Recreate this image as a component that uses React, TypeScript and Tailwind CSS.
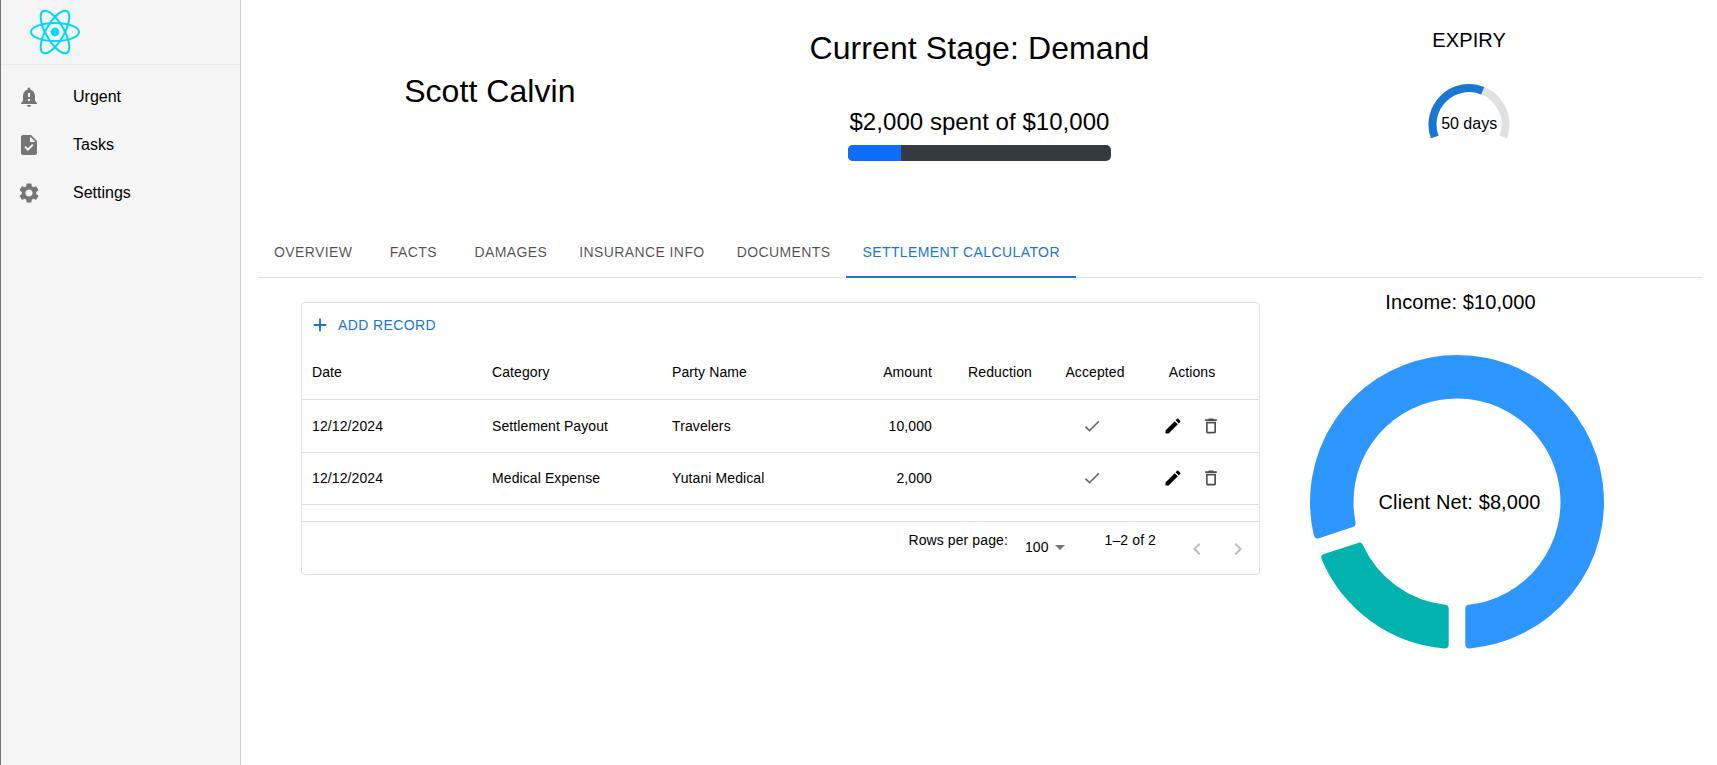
import React from "react";
import {
  MdAdd,
  MdArrowDropDown,
  MdCheck,
  MdChevronLeft,
  MdChevronRight,
  MdEdit,
  MdNotificationImportant,
  MdOutlineDelete,
  MdSettings,
  MdTask,
} from "react-icons/md";

const navItems = [
  { label: "Urgent", icon: MdNotificationImportant },
  { label: "Tasks", icon: MdTask },
  { label: "Settings", icon: MdSettings },
];

const tabs = ["Overview", "Facts", "Damages", "Insurance Info", "Documents", "Settlement Calculator"];

const rows = [
  { date: "12/12/2024", category: "Settlement Payout", party: "Travelers", amount: "10,000" },
  { date: "12/12/2024", category: "Medical Expense", party: "Yutani Medical", amount: "2,000" },
];

const columns = "grid grid-cols-[180px_180px_180px_100px_100px_100px_100px]";

// outline of a ring slice, inset by the corner radius: the stroke rounds it back out
function slicePath(from: number, to: number) {
  const cx = 150;
  const cy = 150;
  const outer = 143;
  const inner = 107.5;
  const pad = 12.3;
  const rad = (deg: number) => (deg * Math.PI) / 180;
  const dOuter = Math.asin(pad / outer);
  const dInner = Math.asin(pad / inner);
  const pt = (r: number, a: number) => `${cx + r * Math.sin(a)} ${cy - r * Math.cos(a)}`;
  const large = to - from > 180 ? 1 : 0;
  const a0 = rad(from);
  const a1 = rad(to);
  return [
    `M${pt(outer, a0 + dOuter)}`,
    `A${outer} ${outer} 0 ${large} 1 ${pt(outer, a1 - dOuter)}`,
    `L${pt(inner, a1 - dInner)}`,
    `A${inner} ${inner} 0 ${large} 0 ${pt(inner, a0 + dInner)}`,
    "Z",
  ].join(" ");
}

function ReactLogo() {
  return (
    <svg width="52" height="46" viewBox="-26 -23 52 46" fill="none" stroke="#00d8ff" strokeWidth="2">
      <circle r="4.4" fill="#00d8ff" stroke="none" />
      <ellipse rx="24" ry="9" />
      <ellipse rx="24" ry="9" transform="rotate(60)" />
      <ellipse rx="24" ry="9" transform="rotate(120)" />
    </svg>
  );
}

function ExpiryGauge() {
  return (
    <div className="relative w-[84px] h-[58px]">
      <svg width="84" height="58" viewBox="0 0 84 58" fill="none" strokeWidth="8">
        <path d="M7.7 54 A36.5 36.5 0 1 1 76.3 54" stroke="#e0e0e0" />
        <path d="M7.7 54 A36.5 36.5 0 0 1 55.7 7.7" stroke="#1976d2" />
      </svg>
      <span className="absolute left-0 right-0 top-[32px] text-center text-base leading-[18px] text-black">50 days</span>
    </div>
  );
}

function Sidebar() {
  return (
    <aside className="w-[241px] shrink-0 bg-[#f5f5f5] border-l border-l-[#757575] border-r border-r-[#cfcfcf]">
      <div className="h-[65px] border-b border-[#ececec] pl-[28px] pt-[9px]">
        <ReactLogo />
      </div>
      <nav className="pt-[8px]">
        {navItems.map((item) => (
          <div key={item.label} className="h-12 flex items-center pl-4">
            <item.icon size={24} className="text-[#757575] shrink-0" />
            <span className="ml-8 text-base text-black">{item.label}</span>
          </div>
        ))}
      </nav>
    </aside>
  );
}

function Header() {
  return (
    <header className="h-[229px] grid grid-cols-3 pl-[4px] pr-[3px] text-black">
      <div className="flex justify-center pt-[73px]">
        <h1 className="text-[32px] leading-[37px] tracking-[0.05px]">Scott Calvin</h1>
      </div>
      <div className="flex flex-col items-center pt-[30px]">
        <h2 className="text-[32px] leading-[37px] tracking-[0.1px]">Current Stage: Demand</h2>
        <p className="mt-[41px] text-2xl leading-[28px] tracking-[0.05px]">$2,000 spent of $10,000</p>
        <div className="mt-[9px] w-[263px] h-4 rounded-[5px] bg-[#343a40] overflow-hidden">
          <div className="w-1/5 h-full bg-[#0d6efd]" />
        </div>
      </div>
      <div className="flex flex-col items-center pt-[29px]">
        <h3 className="text-xl leading-[23px] tracking-[0.1px]">EXPIRY</h3>
        <div className="mt-[31px]">
          <ExpiryGauge />
        </div>
      </div>
    </header>
  );
}

function Tabs() {
  return (
    <div className="ml-[17px] mr-[14px] flex h-[49px] border-b border-[#e0e0e0]">
      {tabs.map((tab) => {
        const active = tab === "Settlement Calculator";
        return (
          <div
            key={tab}
            className={
              active
                ? "min-w-[90px] h-[49px] px-4 pb-[2px] flex items-center justify-center text-sm uppercase tracking-[0.4px] text-[#1976d2] border-b-2 border-[#1976d2]"
                : "min-w-[90px] h-[49px] px-4 pb-[2px] flex items-center justify-center text-sm uppercase tracking-[0.4px] text-[#000000b0] border-b-2 border-transparent"
            }
          >
            {tab}
          </div>
        );
      })}
    </div>
  );
}

function RecordsTable() {
  return (
    <div className="w-[959px] h-[273px] shrink-0 border border-[#e0e0e0] rounded flex flex-col text-sm tracking-[0.1px] text-black">
      <div className="h-[43px] flex items-center pl-[7px] text-[#1976d2] uppercase tracking-[0.4px] shrink-0">
        <MdAdd size={22} />
        <span className="ml-[7px]">Add Record</span>
      </div>
      <div className={`${columns} h-[54px] pb-[2px] items-center border-b border-[#e0e0e0] shrink-0`}>
        <div className="px-[10px]">Date</div>
        <div className="px-[10px]">Category</div>
        <div className="px-[10px]">Party Name</div>
        <div className="px-[10px] text-right">Amount</div>
        <div className="px-[10px] text-right">Reduction</div>
        <div className="pl-[6px] text-center">Accepted</div>
        <div className="text-center">Actions</div>
      </div>
      <div className="pt-px">
        {rows.map((row) => (
          <div key={row.category} className={`${columns} h-[52px] pb-[2px] items-center border-b border-[#e0e0e0]`}>
            <div className="px-[10px]">{row.date}</div>
            <div className="px-[10px]">{row.category}</div>
            <div className="px-[10px]">{row.party}</div>
            <div className="px-[10px] text-right">{row.amount}</div>
            <div />
            <div className="flex justify-center">
              <MdCheck size={20} className="text-[#00000099]" />
            </div>
            <div className="flex items-center pl-[21px] gap-[18px]">
              <MdEdit size={20} className="text-black" />
              <MdOutlineDelete size={20} className="text-[#000000b0]" />
            </div>
          </div>
        ))}
      </div>
      <div className="h-[17px] border-b border-[#e0e0e0] shrink-0" />
      <div className="flex-1 flex items-start justify-end pr-[9px]">
        <span className="mt-[10px] leading-4">Rows per page:</span>
        <span className="ml-[17px] mt-[17px] leading-4">100</span>
        <MdArrowDropDown size={24} className="-ml-px mt-[13px] text-[#757575]" />
        <span className="ml-[33px] mt-[10px] leading-4">1–2 of 2</span>
        <MdChevronLeft size={24} className="ml-[29px] mt-[15px] text-[#00000042]" />
        <MdChevronRight size={24} className="ml-[17px] mt-[15px] text-[#00000042]" />
      </div>
    </div>
  );
}

function IncomeChart() {
  return (
    <div className="flex-1 flex flex-col items-center text-black">
      <p className="text-xl leading-[23px] -mt-[11px] ml-[4px] tracking-[0.1px]">Income: $10,000</p>
      <div className="relative mt-[38px] w-[300px] h-[300px] -ml-[3px]">
        <svg width="300" height="300" viewBox="0 0 300 300" fill="none" strokeWidth="8" strokeLinejoin="round">
          <path d={slicePath(252, 540)} fill="#2e96ff" stroke="#2e96ff" />
          <path d={slicePath(180, 252)} fill="#02b2af" stroke="#02b2af" />
        </svg>
        <span className="absolute inset-0 flex items-center justify-center text-xl tracking-[0.1px] pl-[5px]">
          Client Net: $8,000
        </span>
      </div>
    </div>
  );
}

export default function App() {
  return (
    <div className="flex h-screen overflow-hidden bg-white [font-family:'Liberation_Sans',Arial,sans-serif]">
      <Sidebar />
      <main className="flex-1 min-w-0">
        <Header />
        <Tabs />
        <div className="flex pl-[60px] pr-[60px] pt-[24px]">
          <RecordsTable />
          <IncomeChart />
        </div>
      </main>
    </div>
  );
}
